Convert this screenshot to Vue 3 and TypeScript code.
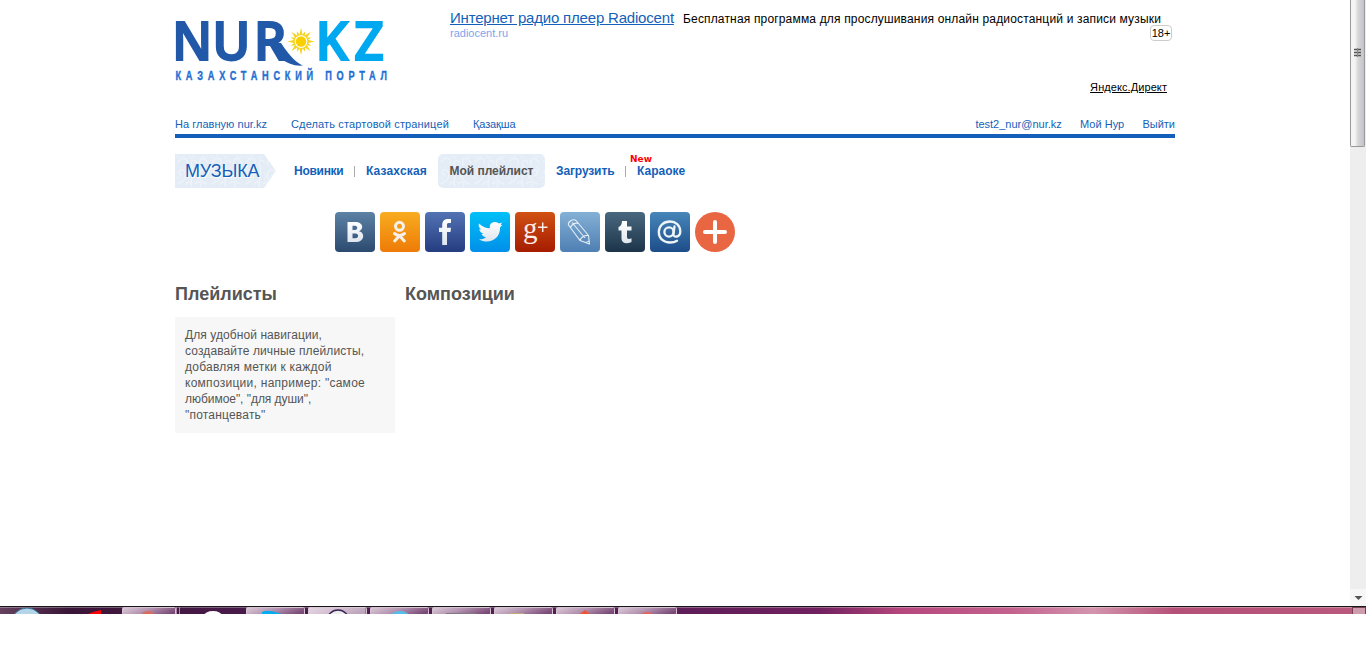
<script setup lang="ts">
interface NavItem {
  label: string
  kind: string
}

interface SpacedText {
  text: string
  spacing: number
}

const siteLinks: SpacedText[] = [
  { text: 'На главную nur.kz', spacing: 0.03 },
  { text: 'Сделать стартовой страницей', spacing: 0.14 },
  { text: 'Қазақша', spacing: -0.1 },
]
const userLinks: string[] = ['test2_nur@nur.kz', 'Мой Нур', 'Выйти']

const sections: NavItem[] = [
  { label: 'Новинки', kind: 'first' },
  { label: 'Казахская', kind: 'divided' },
  { label: 'Мой плейлист', kind: 'active' },
  { label: 'Загрузить', kind: 'plain' },
  { label: 'Караоке', kind: 'divided fresh' },
]

const hint: SpacedText[] = [
  { text: 'Для удобной навигации,', spacing: 0.08 },
  { text: 'создавайте личные плейлисты,', spacing: 0.12 },
  { text: 'добавляя метки к каждой', spacing: 0.25 },
  { text: 'композиции, например: "самое', spacing: 0.27 },
  { text: 'любимое", "для души",', spacing: -0.04 },
  { text: '"потанцевать"', spacing: 0.2 },
]

const rays: number[] = Array.from({ length: 16 }, (_, i) => i * 22.5)
</script>

<template>
  <div class="screen">
    <div class="viewport">
      <div class="page">
        <header class="header">
          <svg class="logo" width="225" height="85" viewBox="175 5 225 85">
            <g class="logo-name">
              <text class="navy" transform="scale(.98 1)" x="175.500 216.700 258.900" y="59.800">NUR</text>
              <text class="cyan" transform="scale(.98 1)" x="322 361.600" y="59.800">KZ</text>
            </g>
            <path d="M270 43 C276 56 287 67 303 65.500 C297 63 291 58 281 43 Z" fill="#2159a8" />
            <g transform="translate(301 41.500)">
              <path
                v-for="(r, i) in rays"
                :key="r"
                :d="i % 2 ? 'M-1.600 -6 L0 -11 L1.600 -6Z' : 'M-1.700 -6 L0 -13.800 L1.700 -6Z'"
                :transform="`rotate(${r})`"
                fill="#f6d21b"
              />
              <circle r="6.300" fill="#fff" />
              <circle r="5.200" fill="#f9cf00" />
            </g>
            <text class="tagline" transform="translate(175.500 80) scale(.68 1)" x="0" y="0" textLength="311">КАЗАХСТАНСКИЙ ПОРТАЛ</text>
          </svg>
          <div class="ad">
            <div class="ad-line">
              <a class="ad-title">Интернет радио плеер Radiocent</a>
              <span class="ad-text">Бесплатная программа для прослушивания онлайн радиостанций и записи музыки</span>
            </div>
            <div class="ad-meta">
              <span class="ad-host">radiocent.ru</span>
              <span class="age">18+</span>
            </div>
            <a class="direct">Яндекс.Директ</a>
          </div>
        </header>

        <div class="topbar">
          <nav class="site-links">
            <a v-for="l in siteLinks" :key="l.text" :style="{ letterSpacing: `${l.spacing}px` }">{{ l.text }}</a>
          </nav>
          <nav class="user-links"><a v-for="l in userLinks" :key="l">{{ l }}</a></nav>
        </div>

        <nav class="sections">
          <div class="brand">
            <svg class="texture" width="101" height="34">
              <defs>
                <pattern id="damask" width="34" height="34" patternUnits="userSpaceOnUse">
                  <rect width="34" height="34" fill="#e4edf6" />
                  <g fill="none" stroke="#eef3f9" stroke-width="1.400">
                    <path d="M2 30 C10 28 14 20 8 16 C4 14 2 20 7 21 M17 33 C14 24 20 20 17 12 C14 7 20 4 22 9 M32 30 C24 28 22 20 27 16 C31 14 34 20 28 22 M3 8 C8 2 14 4 12 10 M33 9 C29 2 23 3 25 12 M11 31 C13 26 17 28 16 32 M20 30 C24 26 28 29 25 33" />
                    <path stroke-width=".8" d="M0 24C5 22 8 26 4 29M12 22C15 20 14 16 12 14M21 26C24 24 22 19 20 18M30 12C33 14 34 17 33 19M1 2C4 5 8 4 9 1M15 1C14 5 18 5 18 2M27 1C28 4 32 4 33 1" />
                  </g>
                </pattern>
              </defs>
              <path d="M0 0H89L101 17L89 34H0Z" fill="url(#damask)" />
            </svg>
            <span class="brand-label">МУЗЫКА</span>
          </div>
          <div v-for="s in sections" :key="s.label" class="section" :class="s.kind">
            <svg v-if="s.kind === 'active'" class="texture" width="107" height="34">
              <rect width="107" height="34" rx="5" fill="url(#damask)" />
            </svg>
            <span class="section-label">{{ s.label }}</span>
            <sup v-if="s.kind.includes('fresh')" class="new">New</sup>
          </div>
        </nav>

        <svg class="share" width="400" height="40" viewBox="0 0 400 40">
          <defs>
            <linearGradient id="g-vk" x2="0" y2="1"><stop stop-color="#5c82a5" /><stop offset="1" stop-color="#2c4a6f" /></linearGradient>
            <linearGradient id="g-ok" x2="0" y2="1"><stop stop-color="#f8ac20" /><stop offset="1" stop-color="#ee7b07" /></linearGradient>
            <linearGradient id="g-fb" x2="0" y2="1"><stop stop-color="#5273b4" /><stop offset="1" stop-color="#253c80" /></linearGradient>
            <linearGradient id="g-tw" x2="0" y2="1"><stop stop-color="#00c0f7" /><stop offset="1" stop-color="#008fe9" /></linearGradient>
            <linearGradient id="g-gp" x2="0" y2="1"><stop stop-color="#d15113" /><stop offset="1" stop-color="#a51c00" /></linearGradient>
            <linearGradient id="g-lj" x2="0" y2="1"><stop stop-color="#84b0d5" /><stop offset="1" stop-color="#4e7fb3" /></linearGradient>
            <linearGradient id="g-tu" x2="0" y2="1"><stop stop-color="#49687f" /><stop offset="1" stop-color="#1c3449" /></linearGradient>
            <linearGradient id="g-ml" x2="0" y2="1"><stop stop-color="#4686b9" /><stop offset="1" stop-color="#1d4d89" /></linearGradient>
            <linearGradient id="ink" x2="0" y2="1"><stop stop-color="#fff" /><stop offset="1" stop-color="#dfe5ee" /></linearGradient>
          </defs>
          <g>
            <rect width="40" height="40" rx="4" fill="url(#g-vk)" />
            <path fill="url(#ink)" fill-rule="evenodd" d="M12.500 10H20.500C28.500 10 29 17.500 24 19.200C30.500 20.500 29.500 30 21 30H12.500ZM17.500 13.800V18H20C23 18 23 13.800 20 13.800ZM17.500 21.600V26.200H20.500C24 26.200 24 21.600 20.500 21.600Z" />
          </g>
          <g transform="translate(45)">
            <rect width="40" height="40" rx="4" fill="url(#g-ok)" />
            <g fill="none" stroke="#f5f0e9" stroke-width="3" stroke-linecap="round">
              <circle cx="19.500" cy="14.300" r="4" />
              <path d="M14.500 21.500C17.500 24 21.500 24 24.500 21.500M19.500 23.800L14.700 29M19.500 23.800L24.300 29" />
            </g>
          </g>
          <g transform="translate(90)">
            <rect width="40" height="40" rx="4" fill="url(#g-fb)" />
            <path fill="url(#ink)" d="M17.200 33V20H14V15.800H17.200V13C17.200 8.500 20 7 23 7H26V11H23.800C22.300 11 22 11.800 22 13.200V15.800H26L25.500 20H22V33Z" />
          </g>
          <g transform="translate(135)">
            <rect width="40" height="40" rx="4" fill="url(#g-tw)" />
            <path fill="url(#ink)" d="M9 11.500C12 14.500 15.500 16.200 20 16.300C19 12 22 10 25 10C27 10 28.200 10.800 29 11.600L32 10.500L30.500 13.200L32.500 12.800L30 15.500C30.500 24 24 29.500 17 29.500C14 29.500 11 28.800 9 27.200C12 27.400 14.500 26.500 16 25.200C13.500 25 12 23.500 11.500 22H13.500C11 21 9.500 19 9.300 17L11.500 17.500C9 16 8 13.500 9 11.500Z" />
          </g>
          <g transform="translate(180)">
            <rect width="40" height="40" rx="4" fill="url(#g-gp)" />
            <text class="plus-letter" x="8" y="26">g</text>
            <path fill="none" stroke="#faece6" stroke-width="1.500" d="M23 15.300H32.500M27.700 10.500V20" />
          </g>
          <g transform="translate(225)">
            <rect width="40" height="40" rx="4" fill="url(#g-lj)" />
            <path fill="none" stroke="#e5eff7" stroke-width="1.100" stroke-linejoin="round" d="M8.500 13C7.500 9.500 13 6.500 16 8.500L28.500 23.500L29.500 32L20 28.500ZM10.500 15.500C12 11.500 16 10.500 18.500 11.500M12 10.500L25 26M20 28.500C21 25 25 23 28.500 23.500M26 30.500L29.300 29" />
          </g>
          <g transform="translate(270)">
            <rect width="40" height="40" rx="4" fill="url(#g-tu)" />
            <path fill="url(#ink)" d="M17 9H22V14.500H26.500V18.500H22V25C22 27.500 24.500 27.200 26.500 26.200V30C21 32.500 16.500 31 16.500 26.500V18.500H13.500V15C16 14.200 17 12 17 9Z" />
          </g>
          <g transform="translate(315)">
            <rect width="40" height="40" rx="4" fill="url(#g-ml)" />
            <g fill="none" stroke="#eff4f9" stroke-width="2.300" stroke-linecap="round">
              <circle cx="19" cy="20" r="4.600" />
              <path d="M24.500 14.500L23.400 22C23 26 30.300 25.500 30.300 19.500C30.300 13 25.500 9.500 20 9.500C13.500 9.500 8.800 14 8.800 20C8.800 26.500 13.500 30.500 20 30.500C23 30.500 25 30 27 28.800" />
            </g>
          </g>
          <g transform="translate(360)">
            <circle cx="20" cy="20" r="20" fill="#e96642" />
            <path d="M20 10V30M10 20H30" stroke="#fff" stroke-width="4" stroke-linecap="round" />
          </g>
        </svg>

        <main class="columns">
          <section class="playlists">
            <h2>Плейлисты</h2>
            <p class="hint">
              <span v-for="line in hint" :key="line.text" :style="{ letterSpacing: `${line.spacing}px` }">{{ line.text }}</span>
            </p>
          </section>
          <section class="tracks"><h2>Композиции</h2></section>
        </main>
      </div>

      <div class="scrollbar">
        <div class="thumb">
          <svg width="7" height="9" viewBox="0 0 7 9"><path d="M0 1.500H7M0 4.500H7M0 7.500H7" stroke="#555" stroke-width="1.500" /><path d="M3.500 0V9" stroke="#888" /></svg>
        </div>
        <svg class="arrow" width="16" height="17" viewBox="0 0 16 17"><path d="M4.500 7H12.500L8.500 11Z" fill="#555" /></svg>
      </div>
    </div>

    <svg class="taskbar" width="1366" height="8" viewBox="0 606 1366 8">
      <defs>
        <linearGradient id="bar" gradientUnits="userSpaceOnUse" x1="0" x2="1366" y1="0" y2="0">
          <stop stop-color="#65415f" /><stop offset=".05" stop-color="#3b1537" /><stop offset=".2" stop-color="#4b1b4c" /><stop offset=".48" stop-color="#5a1d57" /><stop offset=".6" stop-color="#71205f" /><stop offset=".66" stop-color="#b6477d" /><stop offset=".74" stop-color="#c3628e" /><stop offset=".8" stop-color="#d394ad" /><stop offset=".86" stop-color="#b55077" /><stop offset="1" stop-color="#b9587d" />
        </linearGradient>
        <linearGradient id="task" x2="1" y2=".4"><stop stop-color="#dccbd9" /><stop offset=".5" stop-color="#b493b0" /><stop offset="1" stop-color="#7b4b78" /></linearGradient>
      </defs>
      <rect y="606" width="1366" height="8" fill="url(#bar)" />
      <path d="M0 607.500H1366" stroke="#fff" opacity=".3" />
      <circle cx="27" cy="624" r="16" fill="#b4d5e8" stroke="#357197" />
      <path d="M88 614L93 612L101 610V614Z" fill="#f00" />
      <ellipse cx="213" cy="616" rx="9" ry="5" fill="#fff" />
      <g v-for="i in 9" :key="i">
        <rect v-if="i !== 2" :x="60.500 + i * 62" y="607.500" :width="i === 1 ? 53 : 58" height="9" rx="1" fill="url(#task)" stroke="#d5c2d1" />
      </g>
      <path d="M176.500 607V614M179.500 607V614" stroke="#a987a5" />
      <rect x="308.500" y="607.500" width="57" height="9" fill="#e9deea" opacity=".6" />
      <circle cx="148" cy="620" r="9" fill="#d96c5c" />
      <path d="M262 614V612Q268 609 278 613L283 614Z" fill="#00adef" />
      <circle cx="338" cy="621" r="11" fill="#eee" stroke="#382452" stroke-width="1.300" />
      <ellipse cx="400" cy="616" rx="9" ry="5" fill="#58bce9" />
      <path d="M446 613.500H475" stroke="#827886" />
      <path d="M510 613.500H524" stroke="#c5aa76" />
      <path d="M580 614L585 610L590 614Z" fill="#ef5530" />
      <circle cx="647" cy="621" r="9" fill="#e66559" />
      <path d="M0 606.500H1366" stroke="#171717" />
      <rect x="1352.500" y="607.500" width="13" height="9" fill="#ce9cac" stroke="#754354" />
    </svg>
  </div>
</template>

<style>
body {
  margin: 0;
  background: #fff;
}
</style>

<style scoped>
.screen {
  height: 667px;
  overflow: hidden;
  background: #fff;
  font-family: 'Liberation Sans', Arial, sans-serif;
}

.viewport {
  display: flex;
  justify-content: space-between;
  height: 606px;
}

.page {
  width: 1000px;
  margin-left: 175px;
}

.header {
  display: flex;
  height: 113px;
  padding-top: 5px;
  box-sizing: border-box;
}

.logo {
  flex: none;
  overflow: visible;
}

.logo-name {
  font: 600 52.5px 'Open Sans', sans-serif;
  stroke-width: 1.9px;
}

.navy {
  fill: #2159a8;
  stroke: #2159a8;
}

.cyan {
  fill: #00a8f0;
  stroke: #00a8f0;
}

.tagline {
  font: bold 13.5px 'Liberation Sans', sans-serif;
  fill: #1e6fd3;
  stroke: #1e6fd3;
  stroke-width: 0.4px;
}

.plus-letter {
  font: 29px 'Liberation Serif', serif;
  fill: #faece6;
}

.ad {
  display: flex;
  flex-direction: column;
  width: 722px;
  margin-left: 50px;
  white-space: nowrap;
}

.ad-line {
  display: flex;
  align-items: baseline;
  height: 20px;
  line-height: 26px;
}

.ad-title {
  width: 233px;
  color: #145fb9;
  font-size: 15px;
  letter-spacing: -0.19px;
  text-decoration: underline;
}

.ad-text {
  color: #000;
  font-size: 12px;
  letter-spacing: 0.165px;
}

.ad-meta {
  display: flex;
  justify-content: space-between;
  height: 16px;
  font-size: 11px;
  line-height: 16px;
}

.ad-host {
  color: #7ba5ee;
}

.age {
  box-sizing: border-box;
  width: 22px;
  height: 16px;
  border: 1px solid #ccc;
  border-radius: 4px;
  color: #000;
  line-height: 14px;
  text-align: center;
}

.direct {
  align-self: flex-end;
  margin: 38px 5px 0 0;
  color: #000;
  font-size: 11px;
  letter-spacing: 0.08px;
  line-height: 16px;
  text-decoration: underline;
}

.topbar {
  display: flex;
  justify-content: space-between;
  box-sizing: border-box;
  height: 25px;
  border-bottom: 4px solid #145fb9;
  color: #145fb9;
  font-size: 11px;
  line-height: 23px;
}

.site-links {
  display: flex;
  gap: 24px;
}

.user-links {
  display: flex;
  gap: 18.3px;
}

.sections {
  display: flex;
  height: 34px;
  margin-top: 16px;
  color: #145fb9;
  font-size: 12px;
  font-weight: bold;
  line-height: 34px;
}

.brand {
  display: grid;
  width: 119px;
}

.texture,
.brand-label,
.section-label {
  grid-area: 1 / 1;
}

.brand-label {
  padding-left: 10px;
  font-size: 18px;
  font-weight: normal;
  letter-spacing: -0.15px;
  text-shadow: 1px 1px 0 #fff;
}

.section {
  display: grid;
  position: relative;
  white-space: nowrap;
}

.divided::before {
  content: '';
  position: absolute;
  left: -12px;
  top: 12px;
  width: 1px;
  height: 11px;
  background: #aaa;
}

.first {
  width: 72px;
  letter-spacing: -0.28px;
}

.first + .divided {
  width: 72px;
  letter-spacing: 0.15px;
}

.active {
  width: 107px;
  margin-right: 11px;
  color: #555;
}

.active .section-label {
  text-align: center;
  letter-spacing: -0.05px;
}

.plain {
  width: 81px;
  letter-spacing: -0.12px;
}

.new {
  position: absolute;
  left: -7px;
  top: 0;
  color: #f00;
  font: bold 9px/10px 'DejaVu Sans', sans-serif;
  letter-spacing: 0;
}

.share {
  display: block;
  margin: 24px 0 0 160px;
}

.columns {
  display: flex;
  gap: 10px;
  margin-top: 32px;
  color: #555;
}

.playlists {
  width: 220px;
}

h2 {
  margin: 0;
  font-size: 18px;
  line-height: 20px;
}

.hint {
  display: flex;
  flex-direction: column;
  margin: 13px 0 0;
  padding: 10px 10px;
  background: #f7f7f7;
  font-size: 12px;
  line-height: 16px;
  white-space: nowrap;
}

.scrollbar {
  display: flex;
  flex-direction: column;
  justify-content: space-between;
  width: 16px;
  background: #eeeeef;
}

.thumb {
  display: flex;
  justify-content: center;
  box-sizing: border-box;
  width: 15px;
  height: 147px;
  padding-top: 48px;
  border: 1px solid #999;
  border-top: 0;
  border-radius: 0 0 2px 2px;
  background: linear-gradient(90deg, #f4f4f4 30%, #d6d6d9 55%, #c3c4c8);
}

.arrow {
  background: #f7f7f7;
}

.taskbar {
  display: block;
}
</style>
